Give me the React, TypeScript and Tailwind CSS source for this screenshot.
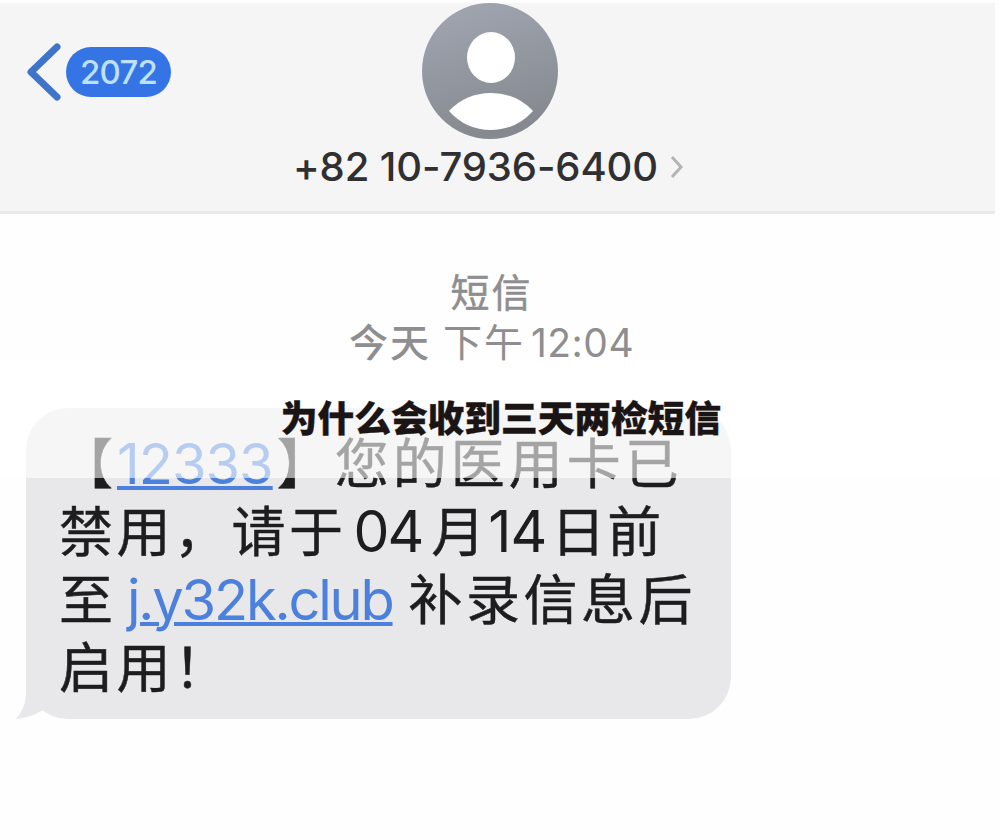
const sms = "font-['Inter','Noto_Sans_CJK_SC',sans-serif]";

function BackButton() {
  return (
    <div className="flex items-center w-[300px] h-[54px] pl-[26px]">
      <svg viewBox="0 0 36 60" className="w-[36px] h-[60px]" fill="none">
        <path d="M31 5 L5 30 L31 55" stroke="#3f74cb" strokeWidth="7" strokeLinecap="round" strokeLinejoin="round" />
      </svg>
      <span className="ml-[4px] w-[105px] h-[50px] pt-px rounded-full bg-[#3474e4] text-[#bfe0fb] text-[33px] tracking-[-0.8px] font-medium flex items-center justify-center">
        2072
      </span>
    </div>
  );
}

function Avatar() {
  return (
    <svg viewBox="0 0 136 136" className="w-[136px] h-[136px]">
      <defs>
        <linearGradient id="avatar" x1="0" y1="0" x2="0.3" y2="1">
          <stop offset="0" stopColor="#a3a7b3" />
          <stop offset="1" stopColor="#868a90" />
        </linearGradient>
      </defs>
      <circle cx="68" cy="68" r="68" fill="url(#avatar)" />
      <ellipse cx="69" cy="54.5" rx="24" ry="25.5" fill="#fff" />
      <path d="M27 108 Q44 90 69 90 Q94 90 111 108 Q94 127 69 127 Q44 127 27 108 Z" fill="#fff" />
    </svg>
  );
}

function Header() {
  return (
    <header className="mt-[3px] w-[995px] h-[211px] bg-[#f5f5f5] border-b-[3px] border-[#e9e9e9] flex">
      <div className="w-[290px] pt-[42px] shrink-0">
        <BackButton />
      </div>
      <div className="w-[400px] flex flex-col items-center">
        <Avatar />
        <div className="flex items-center h-[56px] pr-[3px]">
          <span className="text-[40px] tracking-[-0.1px] font-medium text-[#303032] whitespace-nowrap">+82 10-7936-6400</span>
          <svg viewBox="0 0 14 24" className="w-[14px] h-[24px] ml-[12px]" fill="none">
            <path d="M2 2 L11 12 L2 22" stroke="#b4b4b6" strokeWidth="3" />
          </svg>
        </div>
      </div>
    </header>
  );
}

function Bubble() {
  return (
    <div className="relative ml-[26px] w-[705px] h-[311px] rounded-[42px] bg-[#e8e8ea] pt-[22px] pl-[33px] text-[#1d1d1f] text-[54px]">
      <svg viewBox="0 0 60 60" className="absolute -left-[12px] bottom-0 w-[60px] h-[60px]">
        <path d="M12 0 L12 36 Q11 50 2 60 Q16 59 29 51 Q36 57 56 60 L60 0 Z" fill="#e8e8ea" />
      </svg>
      <div className="relative [-webkit-text-stroke:0.5px]">
        <p className="flex items-center h-[68px] whitespace-nowrap">
          <span className="tracking-[4px]">【</span>
          <a className="text-[#4b80dc] text-[56px] tracking-[-1px] underline decoration-[4px] [-webkit-text-stroke:0px]">12333</a>
          <span className="ml-[4px] tracking-[4px]">】</span>
          <span className="tracking-[4px]">您的医用卡已</span>
        </p>
        <p className="flex items-center h-[68px] whitespace-nowrap">
          <span className="tracking-[3.5px]">禁用，请于</span>
          <span className="ml-[7px] text-[57px] tracking-[-2px] [-webkit-text-stroke:0px]">04</span>
          <span className="ml-[9px]">月</span>
          <span className="ml-[3px] text-[57px] tracking-[-1px] [-webkit-text-stroke:0px]">14</span>
          <span className="ml-[5px] tracking-[2px]">日前</span>
        </p>
        <p className="flex items-center h-[68px] whitespace-nowrap">
          <span>至</span>
          <a className="ml-[14px] text-[#4b80dc] text-[56px] tracking-[-2.2px] underline decoration-[4px] [-webkit-text-stroke:0px]">j.y32k.club</a>
          <span className="ml-[16px] tracking-[3.5px]">补录信息后</span>
        </p>
        <p className="flex items-center h-[68px] whitespace-nowrap">
          <span className="tracking-[3.5px]">启用！</span>
        </p>
      </div>
    </div>
  );
}

export default function App() {
  return (
    <div className={`relative w-[1000px] h-[840px] bg-[#fefefe] overflow-hidden flex flex-col ${sms}`}>
      <Header />
      <div className="mt-[54px] h-[140px] w-[983px] flex flex-col items-center text-[#8e8e90] text-[39px] shrink-0">
        <p className="h-[50px] flex items-center tracking-[2px] [-webkit-text-stroke:0.5px]">短信</p>
        <p className="h-[51px] flex items-center whitespace-nowrap">
          <span className="font-medium tracking-[2px]">今天</span>
          <span className="ml-[12px] tracking-[2px]">下午</span>
          <span className="ml-[6px] tracking-[0.5px]">12:04</span>
        </p>
      </div>
      <Bubble />

      {/* headline strip laid over the conversation */}
      <div className="absolute left-0 top-[360px] w-full h-[118px] pb-[5px] pl-[2px] bg-white/60 flex items-center justify-center">
        <h1 className="font-['Noto_Sans_CJK_SC',sans-serif] font-black text-[36.7px] leading-none text-[#1a1414] [-webkit-text-stroke:0.4px] whitespace-nowrap">
          为什么会收到三天两检短信
        </h1>
      </div>
    </div>
  );
}
